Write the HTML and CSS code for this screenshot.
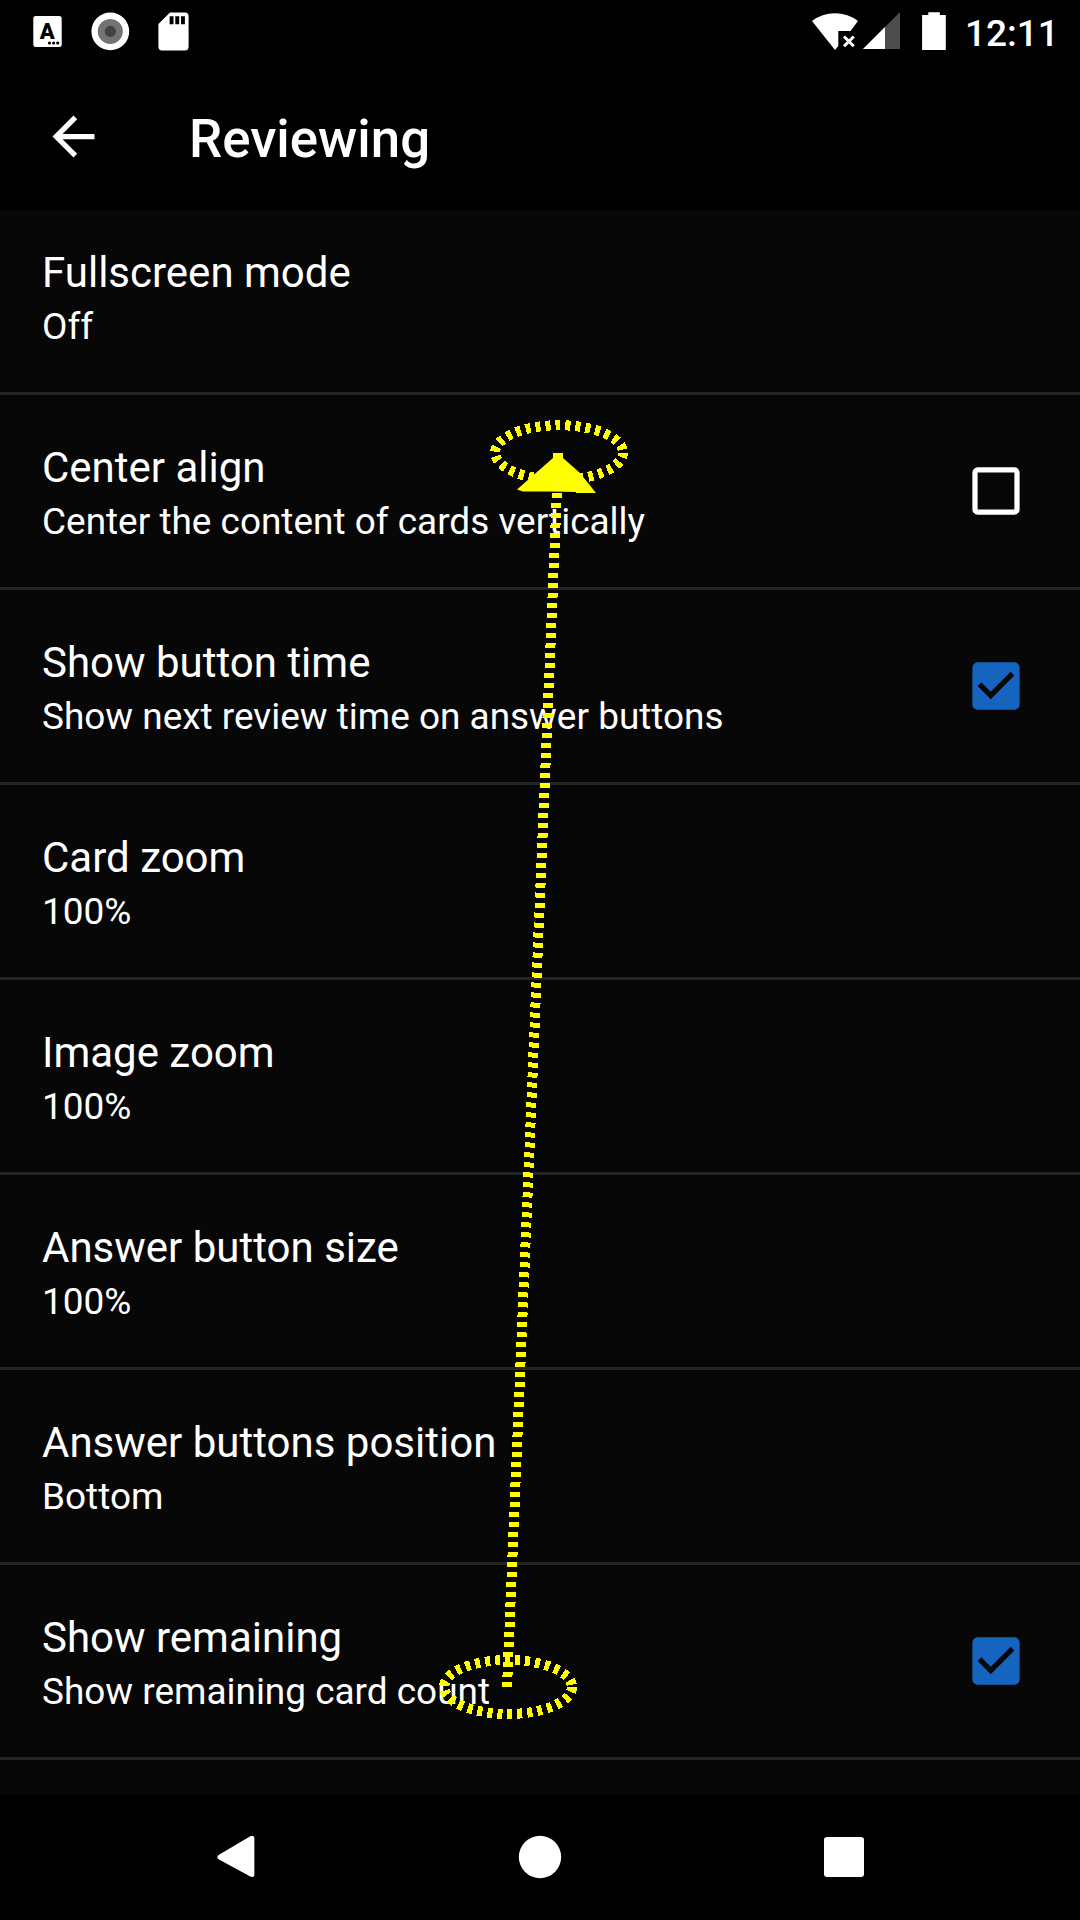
FILE: index.html
```html
<!DOCTYPE html>
<html lang="en">
<head>
<meta charset="utf-8">
<title>Reviewing</title>
<link rel="stylesheet" href="styles.css">
</head>
<body>
<div class="screen">
  <header class="status">
    <svg class="status-left" width="200" height="63" viewBox="0 0 200 63">
      <rect x="33.3" y="16" width="28.4" height="31" rx="2.5" fill="#fff"/>
      <text class="badge-letter" x="47.3" y="38.5" text-anchor="middle">A</text>
      <g fill="#000"><circle cx="49.5" cy="43" r="1.6"/><circle cx="53.6" cy="43" r="1.6"/><circle cx="57.7" cy="43" r="1.6"/></g>
      <circle cx="110.3" cy="31.4" r="18.9" fill="#fff"/>
      <circle cx="110.3" cy="31.4" r="12.5" fill="#737373"/>
      <circle cx="110.3" cy="31.4" r="5.6" fill="#424242"/>
      <path d="M170 12.6h15a3.6 3.6 0 0 1 3.6 3.6v30.6a3.6 3.6 0 0 1-3.6 3.6h-23a3.6 3.6 0 0 1-3.6-3.6V24z" fill="#fff"/>
      <path d="M169.6 16.3h3.9v8h-3.9zM175.3 16.3h3.9v8h-3.9zM181 16.3h3.9v8H181z" fill="#000"/>
    </svg>
    <div class="status-right">
      <svg width="140" height="63" viewBox="810 0 140 63">
        <path d="M812 21Q822 13.2 835 13.2T858 21L850.5 31H838.3V46L835 50z" fill="#fff"/>
        <path d="M844 36.5l9.8 9.8M853.8 36.5l-9.8 9.8" stroke="#fff" stroke-width="3"/>
        <path d="M900 12v37h-37z" fill="#4d4d4d"/>
        <path d="M885 27v22h-22z" fill="#fff"/>
        <path d="M928.3 12.2h11.5V15h6v35h-23.7V15h6.2z" fill="#fff"/>
      </svg>
      <span class="clock">12:11</span>
    </div>
  </header>
  <div class="appbar">
    <svg class="back" viewBox="0 0 24 24"><path d="M20 11H7.83l5.59-5.59L12 4l-8 8 8 8 1.41-1.41L7.83 13H20z" fill="#fff"/></svg>
    <h1 class="heading">Reviewing</h1>
  </div>
  <main class="list">
    <div class="row"><div class="label"><div class="title">Fullscreen mode</div><div class="summary">Off</div></div></div>
    <div class="row"><div class="label"><div class="title">Center align</div><div class="summary">Center the content of cards vertically</div></div>
      <svg class="check" viewBox="-0.19 -0.19 24.38 24.38"><path d="M19 5v14H5V5h14m0-2H5a2 2 0 0 0-2 2v14a2 2 0 0 0 2 2h14a2 2 0 0 0 2-2V5a2 2 0 0 0-2-2z" fill="#fff"/></svg></div>
    <div class="row"><div class="label"><div class="title">Show button time</div><div class="summary">Show next review time on answer buttons</div></div>
      <svg class="check" viewBox="-0.19 -0.19 24.38 24.38"><path d="M19 3H5a2 2 0 0 0-2 2v14a2 2 0 0 0 2 2h14a2 2 0 0 0 2-2V5a2 2 0 0 0-2-2zm-9 14l-5-5 1.41-1.41L10 14.17l7.59-7.59L19 8z" fill="#1565c0"/></svg></div>
    <div class="row"><div class="label"><div class="title">Card zoom</div><div class="summary">100%</div></div></div>
    <div class="row"><div class="label"><div class="title">Image zoom</div><div class="summary">100%</div></div></div>
    <div class="row"><div class="label"><div class="title">Answer button size</div><div class="summary">100%</div></div></div>
    <div class="row"><div class="label"><div class="title">Answer buttons position</div><div class="summary">Bottom</div></div></div>
    <div class="row"><div class="label"><div class="title">Show remaining</div><div class="summary">Show remaining card count</div></div>
      <svg class="check" viewBox="-0.19 -0.19 24.38 24.38"><path d="M19 3H5a2 2 0 0 0-2 2v14a2 2 0 0 0 2 2h14a2 2 0 0 0 2-2V5a2 2 0 0 0-2-2zm-9 14l-5-5 1.41-1.41L10 14.17l7.59-7.59L19 8z" fill="#1565c0"/></svg></div>
  </main>
  <nav class="nav">
    <svg width="64" height="64" viewBox="0 0 64 64"><path d="M15 29.700L46.300 11.200Q50.400 9.800 50.400 13.400V49.400Q50.400 53 46.300 51.600L15 34.400Q11.500 32.100 15 29.700z" fill="#fff"/></svg>
    <svg width="64" height="64" viewBox="0 0 64 64"><circle cx="32" cy="32" r="21.2" fill="#fff"/></svg>
    <svg width="64" height="64" viewBox="0 0 64 64"><rect x="12" y="12" width="40" height="40" rx="3" fill="#fff"/></svg>
  </nav>
  <svg class="gesture" width="1080" height="1920" viewBox="0 0 1080 1920">
    <g class="dashed">
      <path d="M623 452.5A64 27.3 0 1 1 495 452.5A64 27.3 0 1 1 623 452.5"/>
      <path d="M572 1687A64 27 0 1 1 444 1687A64 27 0 1 1 572 1687"/>
      <path d="M507 1687L558.4 456"/>
    </g>
    <path d="M553 453h10v5l17 15 16 20h-20v-1l-26-.5h-27l-6-2 36-31.500z" fill="#ff0"/>
  </svg>
</div>
</body>
</html>
```
FILE: styles.css
```css
body { margin: 0; background: #000; }

.screen {
  position: relative;
  width: 1080px;
  height: 1920px;
  overflow: hidden;
  display: flex;
  flex-direction: column;
  background: #000;
  color: #fff;
  font-family: Roboto, sans-serif;
}

svg { display: block; flex: none; }

.status { height: 63px; display: flex; justify-content: space-between; }
.status-right { display: flex; gap: 15px; width: 270px; }
.badge-letter { font: 900 22px Roboto, sans-serif; fill: #000; }
.clock { font-size: 37px; font-weight: 500; line-height: 67px; white-space: nowrap; }

.appbar { height: 147px; display: flex; align-items: center; }
.back { width: 63px; height: 63px; margin-left: 42px; }
.heading { margin: 4px 0 0 84px; font-size: 52.8px; font-weight: 500; line-height: 62px; }

.list { flex: 1; min-height: 0; overflow: hidden; background: #070707; }
.row {
  box-sizing: border-box;
  height: 195px;
  padding: 0 52px 0 42px;
  border-bottom: 3px solid #252525;
  display: flex;
  justify-content: space-between;
  align-items: center;
}
.row:first-child { height: 185px; align-items: flex-end; }
.label { box-sizing: border-box; height: 192px; padding-top: 47px; }
.row:first-child .label { padding-top: 0; height: 145px; }
.title { font-size: 42px; line-height: 52px; white-space: nowrap; }
.summary { font-size: 36.95px; line-height: 55px; white-space: nowrap; }
.check { width: 64px; height: 64px; }

.nav {
  height: 126px;
  display: flex;
  align-items: center;
  justify-content: center;
  gap: 240px;
}

.gesture { position: absolute; left: 0; top: 0; pointer-events: none; }
.dashed { fill: none; stroke: #ff0; stroke-width: 10px; stroke-dasharray: 5 5; shape-rendering: crispEdges; }
```
